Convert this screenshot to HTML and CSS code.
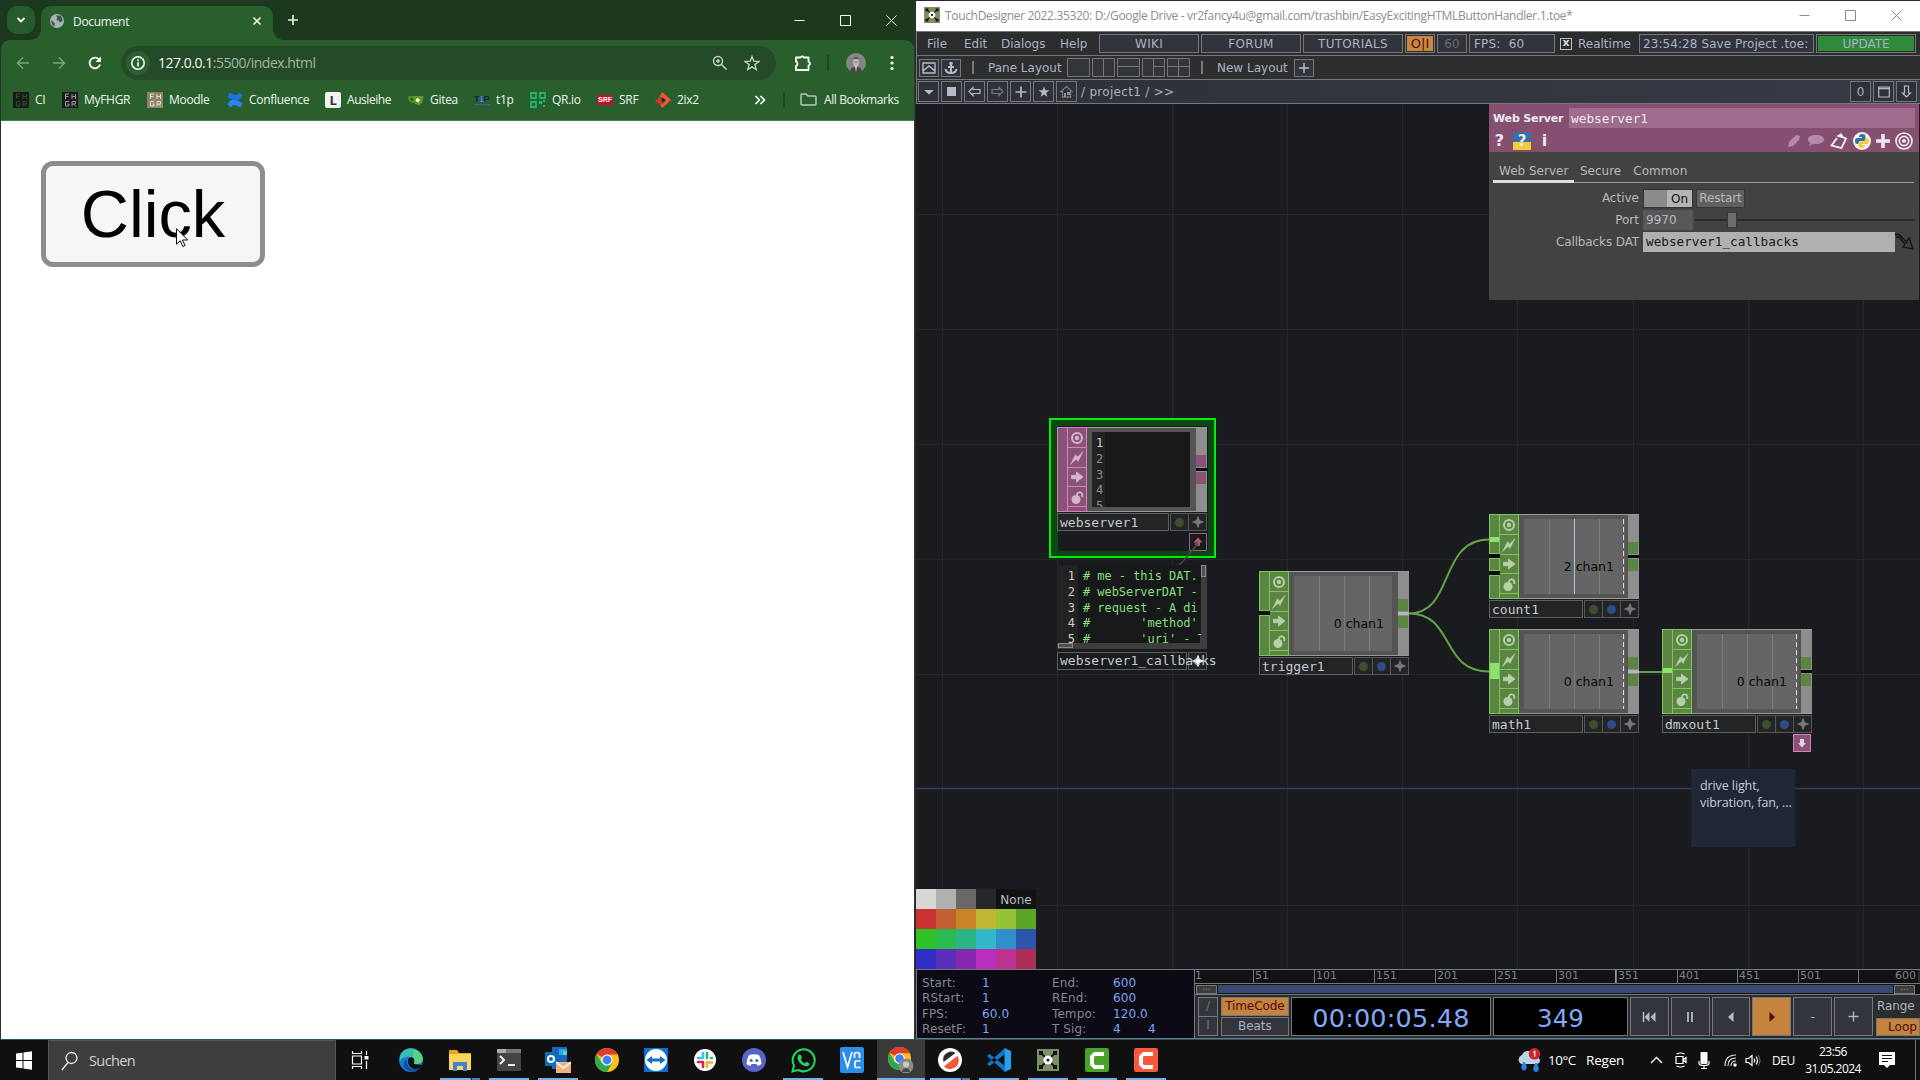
FILE: index.html
```html
<!DOCTYPE html>
<html lang="de">
<head>
<meta charset="utf-8">
<title>Desktop</title>
<link rel="stylesheet" href="styles.css">
</head>
<body>
<svg class="defs" width="0" height="0" aria-hidden="true">
  <symbol id="i-target" viewBox="0 0 16 16"><circle cx="8" cy="8" r="5" fill="none" stroke="currentColor" stroke-width="2"/><circle cx="8" cy="8" r="2.2" fill="currentColor"/></symbol>
  <symbol id="i-bolt" viewBox="0 0 16 16"><path d="M14 1.500 9 11.500 7.200 9.300 1.500 14.500 6.500 4.700 8.700 7z" fill="currentColor" stroke="currentColor" stroke-width=".5"/></symbol>
  <symbol id="i-arrow" viewBox="0 0 16 16"><path d="M2.500 6.300h5V3L14 8l-6.500 5V9.700h-5z" fill="currentColor" stroke="currentColor" stroke-width=".8" stroke-linejoin="round"/></symbol>
  <symbol id="i-lock" viewBox="0 0 16 16"><circle cx="7" cy="10.500" r="4.500" fill="currentColor"/><path d="M8 7V5.500a2.700 2.700 0 0 1 5.300 0V8" fill="none" stroke="currentColor" stroke-width="1.800"/></symbol>
  <symbol id="i-star4" viewBox="0 0 16 16"><path d="M8 2.500 9.500 6.500 13.500 8 9.500 9.500 8 13.500 6.500 9.500 2.500 8 6.500 6.500z" fill="currentColor" stroke="currentColor" stroke-width=".8"/></symbol>
  <symbol id="i-chrome" viewBox="0 0 24 24"><circle cx="12" cy="12" r="12" fill="#fbc116"/><path d="M12 12 1.600 6A12 12 0 0 1 22.400 6L22.400 6.500H12z" fill="#e33b2e"/><path d="M1.600 6A12 12 0 0 0 12 24l5.200-9H6.800z" fill="#2da94f"/><circle cx="12" cy="12" r="5.600" fill="#fff"/><circle cx="12" cy="12" r="4.400" fill="#3b82f0"/></symbol>
  <symbol id="i-td" viewBox="0 0 22 22"><path fill="#7e8f66" d="M0 0h22v22H0z"/><path d="M4 4l14 14M18 4 4 18" stroke="#111" stroke-width="1.800"/><path fill="#111" d="M2 2h4v4H2zM16 2h4v4h-4zM2 16h4v4H2zM16 16h4v4h-4z"/><circle cx="11" cy="11" r="4.500" fill="#fff"/><circle cx="11" cy="11" r="1.600" fill="#222"/></symbol>
  <symbol id="i-fhgr" viewBox="0 0 16 16"><path d="M3.500 7V2H7M3.500 4.500h3M10 2v5M13.500 2v5M10 4.500h4M7 9.500H3.500v4.500H7V12H5.500M10 14.500v-5h3.500V12H10m1.500 0 2.500 2.500" fill="none" stroke="currentColor"/></symbol>
  <symbol id="i-cam" viewBox="0 0 24 24"><path d="M19 4H9L5 8v9l4 4h10v-4H10l-1-1V9l1-1h9z" fill="#fff"/></symbol>
</svg>
<main class="desktop">
  <section class="browser">
    <header class="tabstrip">
      <span class="tabsearch"><svg width="12" height="12" viewBox="0 0 12 12"><path d="m2.500 4 3.500 3.500L9.500 4" fill="none" stroke="#fff" stroke-width="1.800"/></svg></span>
      <div class="tab">
        <svg class="globe" width="14" height="14" viewBox="0 0 14 14"><circle cx="7" cy="7" r="7" fill="#aab3bd"/><path d="M1.500 6 5 9.500l-.5 3C2 11.500 1 9 1.500 6zM6 1.500h4.500C12 3 12.500 5 12.500 7L10 8.500 8.500 6.500 6 6l1.500-2z" fill="#3b5a44"/></svg>
        <span>Document</span>
        <svg class="tabclose" width="10" height="10" viewBox="0 0 10 10"><path d="m1.500 1.500 7 7M8.500 1.500l-7 7" stroke="#fff" stroke-width="1.500"/></svg>
      </div>
      <svg class="newtab" width="12" height="12" viewBox="0 0 12 12"><path d="M6 1v10M1 6h10" stroke="#e6eee6" stroke-width="1.700"/></svg>
      <div class="winctl">
        <svg width="11" height="11" viewBox="0 0 11 11"><path d="M.5 5.500h10" stroke="#fff"/></svg>
        <svg width="11" height="11" viewBox="0 0 11 11"><path d="M.5.500h10v10H.5z" fill="none" stroke="#fff"/></svg>
        <svg width="11" height="11" viewBox="0 0 11 11"><path d="m.5.500 10 10M10.500.500l-10 10" stroke="#fff"/></svg>
      </div>
    </header>
    <div class="chrome">
      <div class="navrow">
        <svg width="14" height="14" viewBox="0 0 14 14"><path d="M13 7H2M7 1.500 1.500 7 7 12.500" fill="none" stroke="#7ba37d" stroke-width="1.500"/></svg>
        <svg width="14" height="14" viewBox="0 0 14 14"><path d="M1 7h11M7 1.500 12.500 7 7 12.500" fill="none" stroke="#7ba37d" stroke-width="1.500"/></svg>
        <svg width="14" height="14" viewBox="0 0 14 14"><path d="M12 8.500A5.300 5.300 0 1 1 10.800 3.300L12.500 5" fill="none" stroke="#fff" stroke-width="1.800"/><path d="M13 .500v5.500H7.500z" fill="#fff"/></svg>
        <div class="omnibox">
          <span class="info"><svg width="16" height="16" viewBox="0 0 16 16"><circle cx="8" cy="8" r="6.200" fill="none" stroke="#fff" stroke-width="1.500"/><path d="M8 7v4.500M8 4.300v1.600" stroke="#fff" stroke-width="1.600"/></svg></span>
          <span class="url">127.0.0.1<i>:5500/index.html</i></span>
          <svg width="16" height="16" viewBox="0 0 16 16"><circle cx="6" cy="6" r="4.500" fill="none" stroke="#c5cdc5" stroke-width="1.500"/><path d="m9.500 9.500 5 5M4 6h4M6 4v4" stroke="#c5cdc5" stroke-width="1.600"/></svg>
          <svg width="16" height="16" viewBox="0 0 16 16"><path d="m8 1.500 1.800 4.700 5 .3-3.900 3.100 1.300 4.900L8 11.800l-4.200 2.700 1.300-4.900L1.200 6.500l5-.3z" fill="none" stroke="#c5cdc5" stroke-width="1.400"/></svg>
        </div>
        <svg class="puzzle" width="18" height="18" viewBox="0 0 18 18"><path d="M2 3.500h4.500a1.800 1.800 0 0 1 3.400 0h4.600v4.300a1.900 1.900 0 0 1 0 3.700V16H2v-4.200a2.200 2.200 0 0 0 0-4.200z" fill="none" stroke="#fff" stroke-width="1.800" stroke-linejoin="round"/></svg>
        <i class="vsep"></i>
        <svg class="avatar" width="20" height="20" viewBox="0 0 20 20"><circle cx="10" cy="10" r="10" fill="#858585"/><path d="M4 18c1-4 3-4 6-4s5 0 6 4a10 10 0 0 1-12 0z" fill="#4a4a4a"/><path d="M9 13h2l-1 6z" fill="#ddd"/><ellipse cx="10" cy="9" rx="3.200" ry="4.300" fill="#bcbcbc"/><path d="M6.500 8c0-5.500 7-5.500 7 0l-1-2h-5z" fill="#4d4d4d"/><path d="M7.500 9h5" stroke="#666" stroke-width=".8"/></svg>
        <svg class="dots" width="4" height="16" viewBox="0 0 4 16"><circle cx="2" cy="2.500" r="1.600" fill="#fff"/><circle cx="2" cy="8" r="1.600" fill="#fff"/><circle cx="2" cy="13.500" r="1.600" fill="#fff"/></svg>
      </div>
      <div class="bookmarks">
        <span class="bm w1"><svg class="fh a" width="16" height="16"><use href="#i-fhgr"/></svg>CI</span>
        <span class="bm w2"><svg class="fh b" width="16" height="16"><use href="#i-fhgr"/></svg>MyFHGR</span>
        <span class="bm w3"><svg class="fh c" width="16" height="16"><use href="#i-fhgr"/></svg>Moodle</span>
        <span class="bm w4"><svg width="16" height="16" viewBox="0 0 16 16"><path d="M.5 12.500C4 6 7 6.500 15.500 11l-2 4.500C8 12.500 6 12 4 15.500z" fill="#2684ff"/><path d="M15.500 3.500C12 10 9 9.500.5 5l2-4.500C8 3.500 10 4 12 .500z" fill="#1d74e8"/></svg>Confluence</span>
        <span class="bm w5"><b class="lico">L</b>Ausleihe</span>
        <span class="bm w6"><svg width="16" height="16" viewBox="0 0 16 16"><path d="M5 4h10.500c0 5-2 9-5 9S5 11 5 4z" fill="#609926"/><path d="M5.500 5H1c0 4 2 5 5 5" fill="none" stroke="#609926" stroke-width="1.500"/><path d="m9 6 3 1.500-1.500 3-3-1.500z" fill="#fff"/></svg>Gitea</span>
        <span class="bm w7"><b class="t1p">T<em>1</em>P</b>t1p</span>
        <span class="bm w8"><svg width="16" height="16" viewBox="0 0 16 16"><path d="M1 1h5v5H1zM10 1h5v5h-5zM1 10h5v5H1z" fill="none" stroke="#1fb36b" stroke-width="1.800"/><path d="M9 9h3v3H9zM13 13h2v2h-2zM13 8h2v2h-2z" fill="#1fb36b"/></svg>QR.io</span>
        <span class="bm w9"><b class="srf">SRF</b>SRF</span>
        <span class="bm w10"><svg width="16" height="16" viewBox="0 0 16 16"><path d="M7 0 16 8l-9 8-2-4 4-1 2-3-4-3-3 1z" fill="#ff5236"/><path d="M0 9 5 5l1 3 3 1-3 4z" fill="#d9381e"/><path d="m7 6 3.500 2L7 10.500z" fill="#2a2320"/></svg>2ix2</span>
        <svg class="more" width="12" height="10" viewBox="0 0 12 10"><path d="m1.500 1 4 4-4 4M6.500 1l4 4-4 4" fill="none" stroke="#fff" stroke-width="1.600"/></svg>
        <i class="vsep"></i>
        <svg class="folder" width="17" height="13" viewBox="0 0 17 13"><path d="M1 11V2q0-1 1-1h4l2 2h7q1 0 1 1v7q0 1-1 1H2q-1 0-1-1z" fill="none" stroke="#b9c8ba" stroke-width="1.500"/></svg>
        <span class="allbm">All Bookmarks</span>
      </div>
    </div>
    <div class="page"><button class="click">Click</button></div>
    <svg class="cursor" width="13" height="20" viewBox="0 0 13 20"><path d="M.5.700v15.500l3.700-3.400 2.700 5.700 2.200-1-2.700-5.500h5.300z" fill="#fff" stroke="#111"/></svg>
  </section>

  <section class="td">
    <header class="tdtitle">
      <svg width="16" height="16"><use href="#i-td"/></svg>
      <span>TouchDesigner 2022.35320: D:/Google Drive - vr2fancy4u@gmail.com/trashbin/EasyExcitingHTMLButtonHandler.1.toe*</span>
      <div class="tdctl">
        <svg width="11" height="11" viewBox="0 0 11 11"><path d="M.5 5.500h10" stroke="#888"/></svg>
        <svg width="11" height="11" viewBox="0 0 11 11"><path d="M.5.500h10v10H.5z" fill="none" stroke="#888"/></svg>
        <svg width="11" height="11" viewBox="0 0 11 11"><path d="m.5.500 10 10M10.500.500l-10 10" stroke="#888"/></svg>
      </div>
    </header>
    <nav class="menurow">
      <span class="m m1">File</span><span class="m m2">Edit</span><span class="m m3">Dialogs</span><span class="m m4">Help</span>
      <span class="box wide">WIKI</span><span class="box wide">FORUM</span><span class="box wide">TUTORIALS</span>
      <span class="box oi">O|I</span><span class="box sixty">60</span><span class="box fps">FPS:&nbsp; 60</span>
      <span class="check">x</span><span class="realtime">Realtime</span>
      <span class="box status">23:54:28 Save Project .toe:</span><span class="box update">UPDATE</span>
    </nav>
    <div class="layoutrow">
      <span class="box s1"><svg width="14" height="12" viewBox="0 0 14 12"><path d="M1 1h12v10H1zM1 9l6-5 6 5" fill="none" stroke="#b4bcc8" stroke-width="1.400"/></svg></span>
      <span class="box s1"><svg width="14" height="14" viewBox="0 0 14 14"><path d="M7 3v9M4 6h6M1.500 8c.5 3 3 4 5.500 4s5-1 5.500-4" fill="none" stroke="#b4bcc8" stroke-width="2"/><circle cx="7" cy="2.500" r="1.800" fill="#b4bcc8"/></svg></span>
      <i class="bar b1"></i><span class="pl">Pane Layout</span>
      <svg class="panes" width="123" height="19" viewBox="0 0 123 19"><g fill="#33353d" stroke="#75777b"><path d="M.5.500h22v18H.5zM25.500.500h22v18h-22zM50.500.500h22v18h-22zM75.500.500h22v18h-22zM100.500.500h22v18h-22z"/><path d="M36.500 0v19M50 8.500h23M86.500 0v19M86 8.500h12M111.500 0v19M100 8.500h23" fill="none"/></g></svg>
      <i class="bar b2"></i><span class="nl">New Layout</span>
      <span class="box s1"><svg width="12" height="12" viewBox="0 0 12 12"><path d="M6 1v10M1 6h10" stroke="#b4bcc8" stroke-width="1.500"/></svg></span>
    </div>
    <div class="pathrow">
      <span class="box sq"><svg width="12" height="12" viewBox="0 0 12 12"><path d="M1 4h10L6 8.500z" fill="#b4bcc8"/></svg></span>
      <span class="box sq"><i class="stop"></i></span>
      <span class="box sq"><svg width="13" height="11" viewBox="0 0 13 11"><path d="M1 5.500 5 1.500v2h7v4H5v2z" fill="none" stroke="#b4bcc8" stroke-width="1.200"/></svg></span>
      <span class="box sq"><svg width="13" height="11" viewBox="0 0 13 11"><path d="M12 5.500 8 1.500v2H1v4h7v2z" fill="none" stroke="#757a82" stroke-width="1.200"/></svg></span>
      <span class="box sq"><svg width="12" height="12" viewBox="0 0 12 12"><path d="M6 .500v11M.5 6h11" stroke="#b4bcc8" stroke-width="1.700"/></svg></span>
      <span class="box sq"><svg width="12" height="12" viewBox="0 0 12 12"><path d="m6 .500 1.400 3.800h4L8.200 6.900 9.400 11 6 8.600 2.600 11l1.200-4.100L.6 4.300h4z" fill="#b4bcc8"/></svg></span>
      <span class="box sq"><svg width="13" height="13" viewBox="0 0 13 13"><path d="M.5 7 6.500 1.500 12.500 7M2.500 6v6h8V6" fill="none" stroke="#8a8f98" stroke-width="1.300" stroke-dasharray="2 .6"/><path d="M4 8h2v4H4zM7 7h3v3H7z" fill="#8a8f98"/></svg></span>
      <span class="path">/ project1 / &gt;&gt;</span>
      <span class="box sq">0</span>
      <span class="box sq"><svg width="12" height="12" viewBox="0 0 12 12"><path d="M.7 1h10.600v10H.7z" fill="none" stroke="#b4bcc8" stroke-width="1.200"/><path d="M.5 2.500h11" stroke="#b4bcc8" stroke-width="1.500"/></svg></span>
      <span class="box sq"><svg width="11" height="13" viewBox="0 0 11 13"><path d="M5.500 12 1.500 8h2V1h4v7h2z" fill="none" stroke="#b4bcc8" stroke-width="1.200"/></svg></span>
    </div>

    <div class="network">
      <svg class="wires" width="1004" height="865" viewBox="916 104 1004 865">
        <path d="M942.500 104v865M1057.500 104v865M1172.500 104v865M1287.500 104v865M1402.500 104v865M1517.500 104v865M1633.500 104v865M1748.500 104v865M1863.500 104v865M916 214.500h1004M916 329.500h1004M916 444.500h1004M916 559.500h1004M916 674.500h1004M916 905.500h1004" stroke="#25262e"/>
        <path d="M916 788.500h1004" stroke="#343a63" stroke-width="1.500"/>
        <path d="M1409 613.500C1455 613.500 1438 539.500 1489 539.500M1409 613.500C1455 613.500 1440 671.500 1489 671.500M1639 672h23" fill="none" stroke="#62a544" stroke-width="2"/>
      </svg>

      <div class="select"></div>
      <article class="node dat n-web">
        <div class="body">
          <div class="ins"><i class="grow"></i></div>
          <div class="flags"><span><svg><use href="#i-target"/></svg></span><span><svg><use href="#i-bolt"/></svg></span><span><svg><use href="#i-arrow"/></svg></span><span><svg><use href="#i-lock"/></svg></span></div>
          <div class="viewer"><div class="code"><div>1</div><div>2</div><div>3</div><div>4</div><div>5</div></div></div>
          <div class="outs"><b></b><u></u><b></b></div>
        </div>
        <div class="foot"><span class="name">webserver1</span><span class="fl"><i class="g"></i></span><span class="fl"><svg><use href="#i-star4"/></svg></span></div>
      </article>
      <span class="dock up"><svg width="12" height="12" viewBox="0 0 12 12"><path d="M6 1.500 10.500 6.500H8v3.500H4V6.500H1.500z" fill="#c45a5e"/><path d="m3 9 3-3" stroke="#4a5a9a" stroke-width="2"/></svg></span>
      <svg class="link" width="24" height="26" viewBox="0 0 24 26"><path d="M2 24C10 17 14 10 22 2" fill="none" stroke="#474a4d" stroke-width="1.500"/></svg>

      <article class="callbacks">
        <div class="cbbody">
          <div class="nums"><div>1</div><div>2</div><div>3</div><div>4</div><div>5</div></div>
          <pre class="src"># me - this DAT.
# webServerDAT -
# request - A di
#       'method'
#       'uri' - T</pre>
          <div class="vscroll"><i></i></div>
        </div>
        <div class="hscroll"><i></i></div>
        <div class="foot"><span class="name">webserver1_callbacks</span><span class="fl bright"><svg><use href="#i-star4"/></svg></span></div>
      </article>

      <article class="node chop n-trigger">
        <div class="body">
          <div class="ins"><i class="h39"></i><s></s><i class="grow"></i></div>
          <div class="flags"><span><svg><use href="#i-target"/></svg></span><span><svg><use href="#i-bolt"/></svg></span><span><svg><use href="#i-arrow"/></svg></span><span><svg><use href="#i-lock"/></svg></span></div>
          <div class="viewer"><div class="plot"><span>0 chan1</span></div></div>
          <div class="outs on"><b></b><u></u><b></b></div>
        </div>
        <div class="foot"><span class="name">trigger1</span><span class="fl"><i class="g"></i></span><span class="fl"><i class="bl"></i></span><span class="fl"><svg><use href="#i-star4"/></svg></span></div>
      </article>

      <article class="node chop n-count">
        <div class="body">
          <div class="ins"><i class="h39 in1"></i><s></s><i class="h13"></i><s></s><i class="grow"></i></div>
          <div class="flags"><span><svg><use href="#i-target"/></svg></span><span><svg><use href="#i-bolt"/></svg></span><span><svg><use href="#i-arrow"/></svg></span><span><svg><use href="#i-lock"/></svg></span></div>
          <div class="viewer"><div class="plot dash cyan"><span>2 chan1</span></div></div>
          <div class="outs"><b></b><u></u><b></b></div>
        </div>
        <div class="foot"><span class="name">count1</span><span class="fl"><i class="g"></i></span><span class="fl"><i class="bl"></i></span><span class="fl"><svg><use href="#i-star4"/></svg></span></div>
      </article>

      <article class="node chop n-math">
        <div class="body">
          <div class="ins"><i class="grow in2"></i></div>
          <div class="flags"><span><svg><use href="#i-target"/></svg></span><span><svg><use href="#i-bolt"/></svg></span><span><svg><use href="#i-arrow"/></svg></span><span><svg><use href="#i-lock"/></svg></span></div>
          <div class="viewer"><div class="plot dash"><span>0 chan1</span></div></div>
          <div class="outs on"><b></b><u></u><b></b></div>
        </div>
        <div class="foot"><span class="name">math1</span><span class="fl"><i class="g"></i></span><span class="fl"><i class="bl"></i></span><span class="fl"><svg><use href="#i-star4"/></svg></span></div>
      </article>

      <article class="node chop n-dmx">
        <div class="body">
          <div class="ins"><i class="grow in3"></i></div>
          <div class="flags"><span><svg><use href="#i-target"/></svg></span><span><svg><use href="#i-bolt"/></svg></span><span><svg><use href="#i-arrow"/></svg></span><span><svg><use href="#i-lock"/></svg></span></div>
          <div class="viewer"><div class="plot dash"><span>0 chan1</span></div></div>
          <div class="outs"><b></b><u></u><b></b></div>
        </div>
        <div class="foot"><span class="name">dmxout1</span><span class="fl"><i class="g"></i></span><span class="fl"><i class="bl"></i></span><span class="fl"><svg><use href="#i-star4"/></svg></span></div>
      </article>
      <span class="dock down"><svg width="12" height="12" viewBox="0 0 12 12"><path d="M6 10.500 2 6H4V2h4v4h2z" fill="#e2d2de"/></svg></span>
      <div class="note">drive light,<br>vibration, fan, ...</div>

      <div class="palette">
        <i class="c1"></i><i class="c2"></i><i class="c3"></i><i class="c4"></i><span>None</span>
        <i class="c5"></i><i class="c6"></i><i class="c7"></i><i class="c8"></i><i class="c9"></i><i class="c10"></i>
        <i class="c11"></i><i class="c12"></i><i class="c13"></i><i class="c14"></i><i class="c15"></i><i class="c16"></i>
        <i class="c17"></i><i class="c18"></i><i class="c19"></i><i class="c20"></i><i class="c21"></i><i class="c22"></i>
      </div>

      <aside class="params">
        <div class="phead">
          <div class="pname"><b>Web Server</b><span>webserver1</span></div>
          <div class="picons">
            <b class="q">?</b><b class="pyq">?</b><b class="q inf">i</b>
            <svg class="first" width="16" height="16" viewBox="0 0 16 16"><path d="m2 14 1-5 7-7 4 1-1 4-6 6z" fill="#b98aa8"/></svg>
            <svg width="18" height="14" viewBox="0 0 18 14"><path d="M9 1c5 0 8 2 8 4.500S14 10 9 10c-1 0-2 0-2.500-.2L2 12l1.500-3C2 8 1 7 1 5.500 1 3 4 1 9 1z" fill="#b98aa8"/></svg>
            <svg width="18" height="18" viewBox="0 0 18 18"><path d="M7.500 3.500 16 6.500 11.500 16 1.500 13.500 7 6" fill="none" stroke="#fff" stroke-width="1.700"/><path d="M7 4.500 11 1l3 4.500z" fill="#fff"/></svg>
            <svg width="18" height="18" viewBox="0 0 18 18"><circle cx="9" cy="9" r="9" fill="#f4f4ee"/><path d="M9 2c3 0 3.500 1 3.500 3v2q0 2-2 2h-3Q5.500 9 5.500 11v1H4q-2 0-2-3t2-3h5V5H6q0-3 3-3z" fill="#3471a8"/><path d="M9 16c-3 0-3.500-1-3.500-3v-1.500q0-2 2-2h3q2 0 2-2V6H14q2 0 2 3t-2 3H9v1h3q0 3-3 3z" fill="#f5cd3c"/></svg>
            <svg width="14" height="14" viewBox="0 0 14 14"><path d="M7 0v14M0 7h14" stroke="#f0e8ee" stroke-width="3.500"/></svg>
            <svg width="18" height="18" viewBox="0 0 18 18"><g fill="none" stroke="#f0e8ee" stroke-width="1.700"><circle cx="9" cy="9" r="8"/><circle cx="9" cy="9" r="4.600"/></g><circle cx="9" cy="9" r="2" fill="#f0e8ee"/></svg>
          </div>
        </div>
        <div class="ptabs"><span class="act">Web Server</span><span>Secure</span><span>Common</span></div>
        <div class="prow"><label>Active</label><span class="toggle"><i></i><em>On</em></span><span class="restart">Restart</span></div>
        <div class="prow"><label>Port</label><span class="port">9970</span><span class="slider"><i></i></span></div>
        <div class="prow"><label class="wl">Callbacks DAT</label><span class="cbf">webserver1_callbacks</span><svg width="20" height="18" viewBox="0 0 20 18"><path d="M0 1.500h4l8 8M1 4h3l6 7M8 14l6-9 4 11z" fill="none" stroke="#141414" stroke-width="1.300"/></svg></div>
      </aside>
    </div>

    <footer class="timeline">
      <div class="tinfo">
        <span>Start:</span><b>1</b><span>End:</span><b>600</b><b></b>
        <span>RStart:</span><b>1</b><span>REnd:</span><b>600</b><b></b>
        <span>FPS:</span><b>60.0</b><span>Tempo:</span><b>120.0</b><b></b>
        <span>ResetF:</span><b>1</b><span>T Sig:</span><b>4</b><b>4</b>
      </div>
      <div class="tright">
        <div class="ruler"><span>1</span><span>51</span><span>101</span><span>151</span><span>201</span><span>251</span><span>301</span><span class="ph">351</span><span>401</span><span>451</span><span>501</span><span class="last">600</span></div>
        <div class="range"><i class="grip">...</i><i class="blue"></i><i class="grip">...</i></div>
        <div class="transport">
          <div class="pair slash"><span>/</span><span>I</span></div>
          <div class="pair mode"><span class="orange">TimeCode</span><span>Beats</span></div>
          <div class="lcd tc">00:00:05.48</div>
          <div class="lcd fr">349</div>
          <span class="tb"><svg width="14" height="12" viewBox="0 0 14 12"><path d="M1.500 1v10" stroke="#b4bcc8" stroke-width="1.500"/><path d="M7.500 1v10L2.500 6zM13.500 1v10l-5-5z" fill="#b4bcc8"/></svg></span>
          <span class="tb"><svg width="8" height="12" viewBox="0 0 8 12"><path d="M2 1v10M6 1v10" stroke="#b4bcc8" stroke-width="1.800"/></svg></span>
          <span class="tb"><svg width="8" height="12" viewBox="0 0 8 12"><path d="M6.500 1v10L1 6z" fill="#b4bcc8"/></svg></span>
          <span class="tb play"><svg width="8" height="12" viewBox="0 0 8 12"><path d="M1.500 1v10L7 6z" fill="#4c0d10"/></svg></span>
          <span class="tb">-</span>
          <span class="tb"><svg width="11" height="11" viewBox="0 0 11 11"><path d="M5.500.500v10M.5 5.500h10" stroke="#b4bcc8" stroke-width="1.300"/></svg></span>
          <div class="rl"><span>Range</span><b>Loop</b></div>
        </div>
      </div>
    </footer>
  </section>

  <footer class="taskbar">
    <span class="start"><svg width="16" height="19" viewBox="0 0 16 19"><path d="M0 2.500 6.500 1.700v7.300H0zM7.500 1.500 16 .300V9H7.500zM0 10h6.500v7.300L0 16.500zM7.500 10H16v8.700l-8.500-1.200z" fill="#fff"/></svg></span>
    <div class="search"><svg width="17" height="20" viewBox="0 0 17 20"><circle cx="10.500" cy="7" r="5.500" fill="none" stroke="#eee" stroke-width="1.300"/><path d="M7 11.500.8 19" stroke="#eee" stroke-width="1.300"/></svg><span>Suchen</span></div>
    <span class="app"><svg width="18" height="18" viewBox="0 0 18 18"><path d="M1.500 0v2.500h9V0M1.500 18v-2.500h9V18M1.500 5h9v8h-9zM15.500 0v4M15.500 10v8" fill="none" stroke="#fff" stroke-width="1.200"/><path d="M13.500 5h4v3.500h-4z" fill="#fff"/></svg></span>
    <span class="app"><svg width="24" height="24" viewBox="0 0 24 24"><circle cx="12" cy="12" r="12" fill="#1679d2"/><path d="M1 8C4-2 20-2 23 9c1 6-4 8-8 7 2-4 0-7-4-7C7 8 3 9 1 13z" fill="#35bfb2"/><path d="M14 1c8 2 11 8 9.500 12-2 4-7 3.500-8.500 2.500 2-3 0-5-1-6z" fill="#5bd282"/><path d="M8 12c-1 8 6 11 12 8-3 4-10 5-14 0-3-4 0-8 2-8z" fill="#0d4f9c"/><path d="M9 12c1-4 6-3 6 0 0 2-1 3 0 4l8 1-2 3c-7 3-12-1-12-8z" fill="#101010"/></svg></span>
    <span class="app run more2"><svg width="22" height="22" viewBox="0 0 22 22"><path d="M0 1h8l2 3h12v16H0z" fill="#e8a90c"/><path d="M0 5h22v16H0z" fill="#fbd65b"/><path d="M4 22v-9h14v9h-4v-5H8v5z" fill="#3b86d0"/></svg></span>
    <span class="app run"><svg width="24" height="22" viewBox="0 0 24 22"><path fill="#444" d="M0 0h24v22H0z"/><path fill="#777" d="M0 0h24v4H0z"/><path fill="#aaa" d="M0 0h9v4H0z"/><path d="m3 7 4 4-4 4M11 16h7" stroke="#eee" stroke-width="2" fill="none"/></svg></span>
    <span class="app run"><svg width="26" height="26" viewBox="0 0 26 26"><path fill="#1669b8" d="M7 0h15v22H7z"/><path fill="#2ea3e6" d="M14 2h8v6h-8z"/><path fill="#50d9c0" d="M18 4h4v4h-4z"/><path fill="#0f6cbd" d="M0 5h12v14H0z"/><circle cx="6" cy="12" r="3" fill="none" stroke="#fff" stroke-width="2"/><path fill="#edb27f" d="M11 15h15v11H11z"/><path d="m11 15 7.500 6 7.500-6" fill="none" stroke="#fff" stroke-width="1.500"/></svg></span>
    <span class="app"><svg width="24" height="24"><use href="#i-chrome"/></svg></span>
    <span class="app"><svg width="24" height="24" viewBox="0 0 24 24"><path fill="#0f6fd0" d="M0 0h24v24H0z"/><circle cx="12" cy="12" r="11" fill="#fff"/><path d="M2.500 12 8 8v2.500h8V8l5.500 4L16 16v-2.500H8V16z" fill="#0f6fd0"/></svg></span>
    <span class="app"><svg width="22" height="22" viewBox="0 0 22 22"><circle cx="11" cy="11" r="11" fill="#fff"/><g stroke-width="2.600" stroke-linecap="round"><path d="M9 4v4M4 9h5" stroke="#36c5f0"/><path d="M13 4v5M18 9h-1" stroke="#2eb67d"/><path d="M13 13v5M13 13.500h5" stroke="#ecb22e"/><path d="M9 13v5M4 13h5" stroke="#e01e5a"/></g></svg></span>
    <span class="app"><svg width="24" height="24" viewBox="0 0 24 24"><circle cx="12" cy="12" r="12" fill="#5865c8"/><path d="M7 7q5-1.500 10 0 2.500 4 2.500 9-2 1.500-4 1.800l-1-1.800h-5l-1 1.800Q6 17.500 4.500 16 4.500 11 7 7z" fill="#fff"/><circle cx="9.200" cy="12.500" r="1.600" fill="#5865c8"/><circle cx="14.800" cy="12.500" r="1.600" fill="#5865c8"/></svg></span>
    <span class="app run"><svg width="25" height="25" viewBox="0 0 25 25"><path d="m1.500 23.500 1.500-6A11 11 0 1 1 7.500 22z" fill="none" stroke="#25d366" stroke-width="2"/><path d="M8 6.500 10 7l1 3-1.200 1.500q1.500 3 4 4l1.500-1.700 3 1.400c.4 3-2.500 3.500-4.300 3C10 17 6.500 13 6.500 9.500q0-2 1.500-3z" fill="#25d366"/></svg></span>
    <span class="app"><svg width="24" height="26" viewBox="0 0 24 26"><rect width="24" height="26" rx="2" fill="#2b8fe8"/><path d="m3 5 4.500 15L12 5M14.500 11V6.500q3-2 5 0V11M20.500 14h-5q-1.500 3 0 6.500h5" fill="none" stroke="#fff" stroke-width="1.700"/></svg></span>
    <span class="app run active"><svg width="26" height="26" viewBox="0 0 26 26"><g transform="scale(.96)"><use href="#i-chrome" width="24" height="24"/></g><circle cx="18" cy="19" r="7.500" fill="#8b8b8b"/><circle cx="18" cy="17.500" r="3" fill="#c8c8c8"/><path d="M14 25c1-5 7-5 8 0z" fill="#444"/></svg></span>
    <span class="app run more2"><svg width="24" height="24" viewBox="0 0 24 24"><circle cx="12" cy="12" r="12" fill="#fff"/><path d="M5.500 14A8 8 0 0 1 17.500 5z" fill="#2c2c30"/><path d="M7 18.500 19.300 9A8 8 0 0 1 7 18.500z" fill="#f1583a" stroke="#f1583a" stroke-width="1.500"/></svg></span>
    <span class="app run"><svg width="24" height="24" viewBox="0 0 24 24"><path d="M17.500 0 24 3v18l-6.500 3z" fill="#2ba0ea"/><path d="m0 8 2.500-2L18 18v6zM0 16l2.500 2L18 6V0z" fill="#1079c6"/></svg></span>
    <span class="app run"><svg width="22" height="22"><use href="#i-td"/></svg></span>
    <span class="app run"><svg class="camg" width="24" height="24"><use href="#i-cam"/></svg></span>
    <span class="app run"><svg class="camr" width="24" height="24"><use href="#i-cam"/></svg></span>
    <div class="tray">
      <svg width="25" height="25" viewBox="0 0 25 25"><path d="M5 16a5 5 0 0 1 1-9c2-6 11-5 12 1 7 0 8 8 2 8z" fill="#bcd3ea"/><path d="M8 14c-3 4-3 8 0 8s3-4 0-8zM20 15c-3 4-3 8.500 0 8.500s3-4.500 0-8.500z" fill="#2a86dd" stroke="#2a86dd"/><circle cx="18.500" cy="5.800" r="5.800" fill="#d02525"/><path d="m17.300 4.500 1.500-1.200v5.400" fill="none" stroke="#fff" stroke-width="1.100"/></svg>
      <span class="temp">10°C</span><span class="rain">Regen</span>
      <svg class="t1" width="13" height="8" viewBox="0 0 13 8"><path d="m1 7 5.500-5.500L12 7" fill="none" stroke="#fff" stroke-width="1.400"/></svg>
      <svg class="t2" width="12" height="16" viewBox="0 0 12 16"><path d="M1 4.500h7v7H1zM8 8l3-2.500v5zM1.500 2q4-2 8 0M1.500 14q4 2 8 0" fill="none" stroke="#fff" stroke-width="1.200"/></svg>
      <svg class="t3" width="12" height="17" viewBox="0 0 12 17"><rect x="2.500" width="7" height="12" rx="1" fill="#fff"/><path d="M1 9v2.500q0 2 5 2t5-2V9M6 13v3.500M3 16.500h6" fill="none" stroke="#fff" stroke-width="1.200"/></svg>
      <svg class="t4" width="13" height="13" viewBox="0 0 13 13"><g fill="none" stroke="#ddd" stroke-width="1.200"><path d="M1 12Q1 1 12 1M4 12q0-8 8-8M7 12q0-5 5-5"/></g><circle cx="11" cy="11" r="1.700" fill="#fff"/></svg>
      <svg class="t5" width="16" height="13" viewBox="0 0 16 13"><path d="M1 4.500h2.500L7 1.500v10L3.500 8.500H1zM9 4.500q1.500 2 0 4M11 2.500q3 4 0 8" fill="none" stroke="#fff" stroke-width="1.200"/><path d="M13 1q4 5.500 0 11" fill="none" stroke="#777"/></svg>
      <span class="deu">DEU</span>
      <span class="clock">23:56<br>31.05.2024</span>
      <svg class="t6" width="16" height="16" viewBox="0 0 16 16"><path d="M0 0h16v13h-5l-3 3-3-3H0z" fill="#fff"/><path d="M3 3.500h10M3 6.500h10M3 9.500h6" stroke="#111" stroke-width="1.100"/></svg>
      <i class="peek"></i>
    </div>
  </footer>
</main>
</body>
</html>
```
FILE: styles.css
```css
* { box-sizing: border-box; }
body { margin: 0; background: #101010; overflow: hidden; }
svg { flex: none; display: block; }
i, em { font-style: normal; }
.defs { position: absolute; }
.desktop {
  width: 1920px; height: 1080px;
  display: grid; grid-template: 1040px 40px / 915px 1005px;
  font-family: "Open Sans", "Noto Sans", sans-serif; font-size: 12px;
}

/* Browser window */
.browser { position: relative; display: flex; flex-direction: column; border: 1px solid #26332a; border-bottom-color: #26536e; border-right-color: #343434; background: #1b391c; }
.tabstrip { height: 39px; display: flex; padding-left: 6px; color: #f2f6f2; }
.tabsearch { width: 28px; height: 28px; margin-top: 5px; border-radius: 10px; background: #275a2c; display: grid; place-items: center; }
.tab { position: relative; width: 232px; height: 35px; margin: 5px 0 0 6px; padding: 0 11px 5px 9px; display: flex; align-items: center; background: #285f2c; border-radius: 10px 10px 0 0; letter-spacing: -.3px; }
.tab::before, .tab::after { content: ""; position: absolute; bottom: 1px; width: 10px; height: 10px; }
.tab::before { left: -10px; background: radial-gradient(circle at 0 0, transparent 9.5px, #285f2c 10px); }
.tab::after { right: -10px; background: radial-gradient(circle at 100% 0, transparent 9.5px, #285f2c 10px); }
.globe { margin-right: 9px; }
.tabclose { margin-left: auto; }
.newtab { margin: 13px 0 0 14px; }
.winctl { margin: 14px 17px 0 auto; display: flex; gap: 35px; }
.chrome { height: 81px; background: #285f2c; border-bottom: 1px solid #4b814c; border-radius: 9px 9px 0 0; }
.navrow { height: 43px; display: flex; align-items: center; padding: 6px 0 3px 15px; }
.navrow > svg:nth-child(2), .navrow > svg:nth-child(3) { margin-left: 22px; }
.omnibox { width: 655px; height: 34px; margin-left: 19px; border-radius: 17px; background: #254a28; display: flex; align-items: center; padding: 0 16px 0 5px; gap: 16px; }
.info { width: 24px; height: 24px; border-radius: 12px; background: #285f2c; display: grid; place-items: center; }
.url { flex: 1; margin-left: -8px; font-size: 14px; letter-spacing: -.48px; color: #f4f7f4; padding-bottom: 1px; }
.url i { color: #a5b5a6; }
.puzzle { margin-left: 18px; }
.vsep { width: 2px; height: 16px; background: #1d4a21; }
.navrow .vsep { margin-left: 15px; }
.avatar { margin-left: 17px; }
.dots { margin-left: 24px; }
.bookmarks { height: 37px; display: flex; align-items: center; padding: 0 0 4px 12px; color: #f0f5ef; letter-spacing: -.3px; }
.bm { display: flex; align-items: center; gap: 6px; white-space: nowrap; }
.w1 { width: 49px; } .w2 { width: 85px; } .w3 { width: 80px; } .w4 { width: 98px; } .w5 { width: 83px; }
.w6 { width: 66px; } .w7 { width: 56px; } .w8 { width: 67px; } .w9 { width: 58px; } .w10 { width: 99px; }
.w5 { letter-spacing: -.45px; }
.fh.a { background: #151a16; color: #2b4f2e; }
.fh.b { background: #1c1c1c; color: #999; }
.fh.c { background: #8f8468; color: #e0dccf; }
.lico { width: 16px; height: 16px; background: #f2f2f2; border-radius: 2px; color: #333; font-size: 13px; line-height: 16px; text-align: center; }
.t1p { width: 16px; border-bottom: 1px solid #2a60c0; color: #20253a; font: bold 9px/10px "Liberation Sans", sans-serif; letter-spacing: -.5px; }
.t1p em { color: #4b7be8; }
.srf { width: 16px; height: 10px; background: #bf1129; color: #fff; font: bold 7px/10px "Liberation Sans", sans-serif; letter-spacing: 0; text-align: center; }
.bookmarks .vsep { margin: 0 15px 0 17px; }
.allbm { margin-left: 7px; white-space: nowrap; letter-spacing: -.4px; }
.page { flex: 1; background: #fff; padding: 40px; }
.click { display: block; width: 224px; height: 106px; padding: 0; border: 5px solid #8d8d8d; border-radius: 12px; background: #f6f6f6; color: #000; font: 66.67px/90px "Liberation Sans", Arial, sans-serif; }
.cursor { position: absolute; left: 175px; top: 227px; }

/* TouchDesigner window */
.td { display: flex; flex-direction: column; padding: 1px 0 0 1px; background: #2a2a2c; border-bottom: 1px solid #26536e; font-family: "DejaVu Sans", Verdana, sans-serif; color: #a9b3c2; min-width: 0; }
.tdtitle { height: 30px; display: flex; align-items: center; background: #fff; padding: 0 0 2px 8px; font-family: "Open Sans", "Noto Sans", sans-serif; color: #8d8d8d; white-space: nowrap; }
.tdtitle > span { margin-left: 5px; letter-spacing: -.33px; }
.tdctl { margin: 0 18px 0 auto; display: flex; gap: 35px; }
.box { border: 1px solid #75777b; background: #32343d; display: flex; align-items: center; justify-content: center; white-space: nowrap; flex: none; }
.menurow { height: 25px; border: 1px solid #75777b; border-right: 0; background: #2c2d2f; display: flex; align-items: center; padding: 0 4px 0 10px; gap: 2px; }
.m { flex: none; margin-right: -2px; }
.m1 { width: 37px; } .m2 { width: 37px; } .m3 { width: 59px; } .m4 { width: 39px; }
.menurow .box { height: 19px; }
.wide { width: 100px; letter-spacing: .3px; }
.menurow .oi { width: 30px; background: #c9883f; color: #4c0d10; box-shadow: inset 0 0 0 1px #2c2d2f; font-size: 13px; }
.menurow .sixty { width: 30px; color: #686c74; }
.menurow .fps { width: 86px; justify-content: flex-start; padding-left: 4px; letter-spacing: .2px; }
.check { width: 12px; height: 12px; margin-left: 3px; border: 1px solid #b8bec8; font: bold 11px/8px "DejaVu Sans", sans-serif; text-align: center; color: #d4d9e0; }
.realtime { margin-left: 4px; width: 57px; letter-spacing: 0; padding-top: 1px; }
.menurow .status { width: 175px; justify-content: flex-start; padding-left: 3px; margin-left: auto; overflow: hidden; letter-spacing: .08px; }
.menurow .update { width: 100px; background: #2f8a3c; box-shadow: inset 0 0 0 1px #2c2d2f; }
.layoutrow { height: 24px; border-left: 1px solid #75777b; border-bottom: 1px solid #75777b; background: #2d2e30; display: flex; align-items: center; padding-left: 2px; gap: 2px; }
.s1 { width: 20px; height: 18px; }
.bar { width: 2px; height: 13px; background: #75777b; flex: none; }
.b1 { margin: 0 12px 0 9px; } .b2 { margin: 0 12px 0 9px; }
.pl { width: 77px; white-space: nowrap; } .nl { width: 75px; white-space: nowrap; }
.pathrow { height: 24px; border-left: 1px solid #75777b; border-bottom: 1px solid #75777b; background: linear-gradient(90deg, #2e3036, #363a45); display: flex; align-items: center; padding: 0 3px 0 1px; gap: 2px; }
.sq { width: 21px; height: 21px; background: #2f3138; }
.stop { width: 9px; height: 9px; background: #b4bcc8; }
.path { flex: 1; padding-left: 2px; letter-spacing: .3px; }

.network { position: relative; height: 865px; background: #191b1f; overflow: hidden; }
.wires { position: absolute; inset: 0; }
.select { position: absolute; left: 133px; top: 314px; width: 167px; height: 140px; border: 2px solid #00ef0c; background: linear-gradient(#191b1f, #191b1f) center / 150px 125px no-repeat #0b4711; }
.node { position: absolute; width: 150px; --c: #5c8544; --l: #79c959; --i: #b6d0a9; }
.node.dat { --c: #8b5279; --l: #d87fc0; --i: #d7b5cc; }
.n-web { left: 141px; top: 323px; } .n-trigger { left: 343px; top: 467px; } .n-count { left: 573px; top: 410px; }
.n-math { left: 573px; top: 525px; } .n-dmx { left: 746px; top: 525px; }
.body { height: 85px; display: flex; border-top: 1px solid #999; border-bottom: 1px solid #999; background: #545454; }
.ins { width: 11px; display: flex; flex-direction: column; margin: -1px 0; }
.ins i { background: var(--c); border: 1px solid var(--l); }
.ins s { height: 4px; background: #08090a; flex: none; }
.grow { flex: 1; } .h39 { height: 40px; } .h13 { height: 13px; }
.in1 { background: linear-gradient(#90e06e, #90e06e) 0 22px / 100% 5px no-repeat var(--c) !important; }
.in2 { background: linear-gradient(#90e06e, #90e06e) 0 33px / 100% 16px no-repeat var(--c) !important; }
.in3 { background: linear-gradient(#90e06e, #90e06e) 0 38px / 100% 5px no-repeat var(--c) !important; }
.flags { width: 19px; margin: -1px 0; display: flex; flex-direction: column; background: var(--c); border: 1px solid var(--l); border-left: 0; color: var(--i); }
.flags span { height: 19.800px; padding-top: 1px; border-bottom: 1px solid var(--l); display: grid; place-items: center; }
.flags svg { width: 16px; height: 16px; }
.viewer { width: 109px; padding: 4px 6px 4px 5px; }
.plot { height: 75px; color: #080808; font-size: 12.500px; text-align: right; padding: 40px 8px 0 0; line-height: 15px; background: linear-gradient(#7e7e7e, #7e7e7e) 25px 0 / 1px 100% no-repeat, linear-gradient(#7a7a7a, #7a7a7a) 50px 0 / 1px 100% no-repeat, linear-gradient(#7e7e7e, #7e7e7e) 75px 0 / 1px 100% no-repeat, #656565; }
.dash { background: repeating-linear-gradient(#dadada 0 5px, transparent 5px 8px) 99px 0 / 1px 100% no-repeat, linear-gradient(#7e7e7e, #7e7e7e) 25px 0 / 1px 100% no-repeat, linear-gradient(#7a7a7a, #7a7a7a) 50px 0 / 1px 100% no-repeat, linear-gradient(#7e7e7e, #7e7e7e) 75px 0 / 1px 100% no-repeat, #656565; padding-right: 11px; margin-right: -3px; }
.cyan { background: repeating-linear-gradient(#dadada 0 5px, transparent 5px 8px) 99px 0 / 1px 100% no-repeat, linear-gradient(#7e7e7e, #7e7e7e) 25px 0 / 1px 100% no-repeat, linear-gradient(#a5cddb, #a5cddb) 50px 0 / 1px 100% no-repeat, linear-gradient(#7e7e7e, #7e7e7e) 75px 0 / 1px 100% no-repeat, #656565; }
.outs { width: 11px; background: #8e8e8e; padding: 27px 1px 0 0; }
.outs b { display: block; height: 12px; background: var(--c); }
.outs u { display: block; height: 3px; background: #08090a; margin: 1px -1px 1px 0; }
.outs.on u { background: #b5b5c0; }
.code { height: 75px; background: linear-gradient(90deg, #222 13px, #181818 13px); color: #8c8c86; font: 12px/15.800px "DejaVu Sans Mono", monospace; padding: 4px 0 0 4px; overflow: hidden; }
.code div:first-child { color: #d0d0cc; }
.foot { height: 18px; margin-top: 1px; display: flex; gap: 1px; font: 13px/17px "DejaVu Sans Mono", monospace; color: #c6cacf; }
.foot .name { flex: 1; min-width: 0; border: 1px solid #5e5f61; background: #222426; padding-left: 2px; white-space: nowrap; }
.fl { width: 19px; border: 1px solid #55575a; margin-left: -2px; background: #222426; display: grid; place-items: center; color: #77797c; }
.name + .fl { margin-left: 0; }
.fl svg { width: 16px; height: 16px; }
.fl i { width: 9px; height: 9px; border-radius: 5px; }
.fl .g { background: #3d4f30; } .fl .bl { background: #2c4d86; }
.bright { color: #fff; }
.dock { position: absolute; width: 18px; height: 18px; display: grid; place-items: center; }
.up { left: 273px; top: 429px; border: 1px solid #9c5c88; }
.down { left: 877px; top: 630px; border: 1px solid #d87fc0; background: #8b5279; }
.link { position: absolute; left: 260px; top: 438px; }
.callbacks { position: absolute; left: 141px; top: 461px; width: 150px; }
.cbbody { height: 78px; display: flex; background: #17181a; font: 12px/15.800px "DejaVu Sans Mono", monospace; overflow: hidden; padding-top: 4px; }
.nums { width: 21px; background: #222; text-align: right; padding-right: 3px; color: #ccc; margin-top: -4px; padding-top: 4px; }
.src { flex: 1; margin: 0; padding-left: 5px; overflow: hidden; font: inherit; letter-spacing: -.06px; color: #86df7c; }
.vscroll { width: 6px; margin-top: -4px; background: #3d3d3d; }
.vscroll i, .hscroll i { display: block; border: 1px solid #8a8a8a; background: #505050; }
.vscroll i { width: 5px; height: 12px; }
.hscroll { height: 6px; background: #3d3d3d; margin-bottom: 3px; padding-left: 1px; }
.hscroll i { width: 15px; height: 5px; }
.callbacks .foot { position: relative; z-index: 1; line-height: 16px; }
.callbacks .name { z-index: 2; background: none; }
.note { position: absolute; left: 775px; top: 665px; width: 104px; height: 78px; background: #1f2635; color: #c9cdd4; font: 12.500px/16.500px "Open Sans", sans-serif; padding: 9px 0 0 9px; white-space: nowrap; letter-spacing: -.1px; }
.palette { position: absolute; left: 0; bottom: 0; display: grid; grid: repeat(4, 20px) / repeat(6, 20px); }
.palette span { grid-column: span 2; background: #121212; display: grid; place-items: center; color: #b4bcc8; padding-top: 1px; }
.c1 { background: #d8d8d8; } .c2 { background: #b0b0b0; } .c3 { background: #686868; } .c4 { background: #27262b; }
.c5 { background: #cb3234; } .c6 { background: #c15f30; } .c7 { background: #c98426; } .c8 { background: #c0b634; } .c9 { background: #95c334; } .c10 { background: #5ca626; }
.c11 { background: #30c326; } .c12 { background: #2cba52; } .c13 { background: #2ab585; } .c14 { background: #32b9c9; } .c15 { background: #318fcb; } .c16 { background: #2c56ac; }
.c17 { background: #3030c8; } .c18 { background: #5b2eb9; } .c19 { background: #8428ad; } .c20 { background: #b92ebd; } .c21 { background: #bd3190; } .c22 { background: #ac2e58; }

.params { position: absolute; right: 1px; top: 0; width: 430px; height: 196px; background: #424242; color: #b9b9b9; }
.phead { height: 48px; background: #85506f; padding: 4px 4px 0; }
.pname { display: flex; height: 20px; align-items: center; color: #ececec; }
.pname b { width: 76px; font-size: 11px; white-space: nowrap; letter-spacing: -.15px; }
.pname span { flex: 1; background: #a06c8e; height: 20px; padding-left: 2px; font: 12.800px/21px "DejaVu Sans Mono", monospace; }
.picons { display: flex; align-items: center; height: 25px; gap: 5px; padding-right: 2px; color: #f0e8ee; }
.q { font-size: 16px; width: 13px; text-align: center; }
.pyq { width: 18px; height: 18px; margin: 0 2px; font-size: 15px; line-height: 18px; text-align: center; background: linear-gradient(#3471a8 55%, #f5cd3c 55%); }
.picons .first { margin-left: auto; }
.ptabs { margin: 5px 5px 0 4px; height: 26px; display: flex; gap: 12px; line-height: 28px; background: linear-gradient(#9a9f9f, #9a9f9f) 0 25px / 100% 1px no-repeat; }
.ptabs .act { width: 81px; margin-right: -6px; padding-left: 6px; border-bottom: 3px solid #dedede; white-space: nowrap; }
.prow { height: 22px; display: flex; align-items: center; }
.ptabs + .prow { margin-top: 4px; }
.prow label { width: 150px; margin-right: 4px; text-align: right; }
.prow .wl { letter-spacing: -.12px; }
.toggle { width: 50px; height: 19px; display: flex; border: 1px solid #333; background: #8b8b8b; }
.toggle i { flex: 1; } .toggle em { width: 25px; background: #b4b4b4; color: #111; text-align: center; line-height: 18px; }
.restart { width: 49px; height: 19px; margin-left: 3px; border: 1px solid #363636; background: #606060; text-align: center; line-height: 17px; letter-spacing: -.1px; }
.port { width: 50px; height: 20px; background: #55585a; line-height: 20px; padding-left: 3px; }
.slider { width: 220px; height: 16px; margin-left: 2px; background: linear-gradient(#2b2b2b, #2b2b2b) 0 7px / 100% 2px no-repeat; padding-left: 32px; }
.slider i { display: block; width: 10px; height: 16px; background: #6c6c6c; border: 1px solid #3a3a3a; }
.cbf { width: 252px; height: 20px; background: #b0b0b0; color: #161616; font: 12.700px/20px "DejaVu Sans Mono", monospace; padding-left: 3px; }

.timeline { height: 70px; display: flex; border: 1px solid #75777b; border-right: 0; background: #2c2c2e; }
.tinfo { width: 277px; background: #0b0a15; padding: 5px 0 0 5px; display: grid; grid-template-columns: 60px 70px 61px 35px 40px; grid-auto-rows: 15.300px; line-height: 16px; color: #84888f; letter-spacing: .1px; }
.tinfo b { font-weight: 400; color: #7fa6f5; }
.tright { flex: 1; border-left: 1px solid #75777b; min-width: 0; }
.ruler { height: 13px; background: #121214; display: grid; grid-template-columns: 58px 61px 60px 61px 60px 61px 60px 61px 60px 61px 60px 1fr; color: #7d8087; font-size: 11px; line-height: 12px; margin-right: 2px; }
.ruler span { padding-left: 1px; border-left: 1px solid #75777b; }
.ruler span:first-child { border-left: 0; padding-left: 0; }
.ruler .ph { box-shadow: -1px 0 0 #8d97b5; }
.ruler .last { text-align: right; padding-right: 2px; }
.range { height: 12px; border-top: 1px solid #75777b; border-bottom: 1px solid #75777b; background: #121214; display: flex; align-items: center; gap: 1px; padding: 0 5px 0 1px; }
.grip { width: 21px; height: 9px; border: 1px solid #75777b; background: #3c3c3e; color: #999; font-size: 9px; line-height: 3px; text-align: center; }
.blue { flex: 1; height: 8px; background: #374a72; }
.transport { display: flex; height: 43px; padding: 2px 0 2px 3px; gap: 2px; overflow: hidden; }
.pair { display: flex; flex-direction: column; height: 39px; text-align: center; }
.pair span { flex: 1; border: 1px solid #75777b; background: #33353d; line-height: 17px; }
.slash { width: 20px; margin-right: 1px; color: #6f747c; }
.slash span + span { border-top: 0; }
.mode { width: 68px; gap: 1px; letter-spacing: -.1px; }
.mode .orange, .play, .rl b { background: #c4843e !important; color: #4c0d10; }
.lcd { border: 1px solid #75777b; background: #000; color: #82a8f8; font-size: 25.500px; line-height: 41px; text-align: center; }
.tc { width: 201px; letter-spacing: .2px; } .fr { width: 135px; font-size: 24.500px; }
.tb { width: 39px; border: 1px solid #75777b; background: #33353d; display: grid; place-items: center; }
.rl { width: 45px; padding-left: 1px; display: flex; flex-direction: column; }
.rl span { height: 21px; line-height: 18px; padding-left: 1px; letter-spacing: -.1px; }
.rl b { height: 18px; border: 1px solid #75777b; font-weight: 400; padding-left: 11px; line-height: 17px; }

/* Taskbar */
.taskbar { grid-column: 1 / -1; background: #101010; display: flex; color: #fff; }
.start { width: 48px; display: grid; place-items: center; }
.search { width: 288px; border: 1px solid #565656; border-bottom: 0; background: #3e3e3e; display: flex; align-items: center; padding-left: 12px; gap: 11px; color: #d2d2d2; font-size: 14.500px; }
.search span { letter-spacing: -.6px; }
.app { width: 48px; margin-right: 1px; display: grid; place-items: center; }
.search + .app + .app { margin-left: 2px; }
.run { background: linear-gradient(#76b0e8, #76b0e8) center bottom / 40px 2px no-repeat; }
.more2 { background: linear-gradient(90deg, #76b0e8 31px, #0c1a28 31px 32px, #4d7fb0 32px) center bottom / 40px 2px no-repeat; }
.active { background: linear-gradient(#76b0e8, #76b0e8) center bottom / 100% 2px no-repeat #3a3a3a; }
.camg { background: #4aa329; border-radius: 2px; } .camr { background: #f9583b; border-radius: 2px; }
.tray { flex: 1; display: flex; align-items: center; justify-content: flex-end; }
.temp { width: 38px; margin-left: 7px; font-size: 13.500px; letter-spacing: -.5px; } .rain { width: 64px; font-size: 13.500px; letter-spacing: -.2px; }
.t2 { margin-left: 12px; } .t3 { margin-left: 11px; } .t4 { margin-left: 14px; } .t5 { margin-left: 8px; }
.deu { margin-left: 11px; width: 28px; letter-spacing: -.4px; }
.clock { width: 66px; text-align: center; line-height: 17px; letter-spacing: -.55px; padding-bottom: 1px; }
.t6 { margin: 0 20px 0 13px; }
.peek { width: 5px; height: 40px; border-left: 1px solid #777; }
```
